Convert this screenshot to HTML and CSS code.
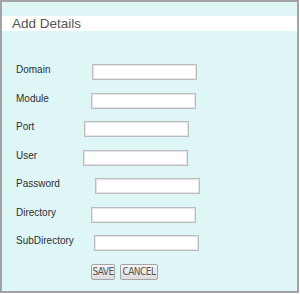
FILE: index.html
```html
<!DOCTYPE html>
<html lang="en">

<head>
  <meta charset="UTF-8">
  <meta name="viewport" content="width=device-width, initial-scale=1.0">
  <title>Add Details</title>
  <link rel="stylesheet" href="styles.css">
</head>

<body>

  <div class="panel">
    <h2 class="panel-title">Add Details</h2>
    <form id="detailsForm" class="details-form">
      <div class="field field--domain">
        <label for="domain">Domain</label>
        <input type="text" id="domain" name="domain">
      </div>

      <div class="field field--module">
        <label for="module">Module</label>
        <input type="text" id="module" name="module">
      </div>

      <div class="field field--port">
        <label for="port">Port</label>
        <input type="text" id="port" name="port">
      </div>

      <div class="field field--user">
        <label for="user">User</label>
        <input type="text" id="user" name="user">
      </div>

      <div class="field field--password">
        <label for="password">Password</label>
        <input type="password" id="password" name="password">
      </div>

      <div class="field field--directory">
        <label for="directory">Directory</label>
        <input type="text" id="directory" name="directory">
      </div>

      <div class="field field--subdirectory">
        <label for="subdirectory">SubDirectory</label>
        <input type="text" id="subdirectory" name="subdirectory">
      </div>

      <div class="actions">
        <button type="submit" class="btn btn--save">SAVE</button>
        <button type="button" class="btn btn--cancel">CANCEL</button>
      </div>
    </form>
  </div>

</body>

</html>
```

FILE: styles.css
```css
/* Add details panel */
body {
  margin: 0;
  padding: 0;
  background-color: #fff;
  font-family: "Liberation Sans", Arial, sans-serif;
}

.panel {
  box-sizing: border-box;
  width: 299px;
  height: 293px;
  padding-top: 14px;
  background-color: #dff6f6;
  border: 2px solid #a3a3a3;
}

.panel-title {
  margin: 0;
  height: 15px;
  padding-left: 10px;
  background-color: #fff;
  font-size: 13.5px;
  font-weight: normal;
  line-height: 15px;
  color: #555;
}

.details-form {
  padding-top: 33px;
  padding-left: 14px;
}

.field {
  display: flex;
  align-items: flex-start;
  height: 28.5px;
}

.field label {
  flex: none;
  font-size: 10px;
  line-height: 12px;
  color: #2e2e2e;
}

.field input {
  box-sizing: border-box;
  width: 105px;
  height: 16px;
  margin: 0;
  padding: 0 2px;
  background-color: #fff;
  border: 1px solid #bdbdbd;
  box-shadow: inset 0 0 0 1px #e4e4e4;
  font-size: 10px;
}

.field--domain label { width: 76px; }
.field--module label { width: 75px; }
.field--port label { width: 68px; }
.field--user label { width: 67px; }
.field--password label { width: 79px; }
.field--directory label { width: 75px; }
.field--subdirectory label { width: 78px; }

.actions {
  display: flex;
  gap: 5px;
  padding-left: 75px;
}

.btn {
  box-sizing: border-box;
  height: 16px;
  padding: 0;
  background: linear-gradient(#f6f6f6, #dcdcdc);
  border: 1px solid #a5a5a5;
  border-radius: 2px;
  font-family: "DejaVu Sans", sans-serif;
  font-stretch: condensed;
  font-size: 10px;
  letter-spacing: -0.5px;
  line-height: 14px;
  color: #555;
  cursor: pointer;
}

.btn--save {
  width: 24px;
}

.btn--cancel {
  width: 38px;
}
```
